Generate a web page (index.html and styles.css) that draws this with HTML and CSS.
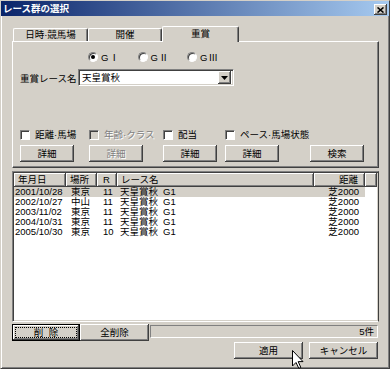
FILE: index.html
```html
<!DOCTYPE html>
<html lang="ja">
<head>
<meta charset="utf-8">
<title>レース群の選択</title>
<link rel="stylesheet" href="styles.css">
</head>
<body>
<div class="window">
  <div class="titlebar">
    <span class="title">レース群の選択</span>
    <span class="close"><svg width="7" height="6" viewBox="0 0 7 6"><path d="M0.5 0.5 L6.5 5.5 M6.5 0.5 L0.5 5.5" stroke="#000" stroke-width="1.6"/></svg></span>
  </div>
  <div class="body">
    <div class="tabs">
      <div class="tab t1">日時·競馬場</div>
      <div class="tab t2">開催</div>
      <div class="tab t3 active">重賞</div>
    </div>
    <div class="panel">
      <div class="radio-row">
        <div class="radio-item"><span class="radio checked"></span><span>G<span class="roman">Ⅰ</span></span></div>
        <div class="radio-item"><span class="radio"></span><span>G<span class="roman">Ⅱ</span></span></div>
        <div class="radio-item"><span class="radio"></span><span>G<span class="roman">Ⅲ</span></span></div>
      </div>
      <div class="combo-row">
        <span class="combo-label">重賞レース名</span>
        <div class="combo">
          <span class="combo-text">天皇賞秋</span>
          <span class="drop"><svg width="7" height="4" viewBox="0 0 7 4"><path d="M0 0 H7 L3.5 4 Z" fill="#000"/></svg></span>
        </div>
      </div>
      <div class="opts">
        <div class="chk"><span class="cb"></span><span>距離·馬場</span></div>
        <div class="chk disabled"><span class="cb"></span><span>年齢·クラス</span></div>
        <div class="chk"><span class="cb"></span><span>配当</span></div>
        <div class="chk wide"><span class="cb"></span><span>ペース·馬場状態</span></div>
        <div class="btn">詳細</div>
        <div class="btn disabled">詳細</div>
        <div class="btn">詳細</div>
        <div class="btn">詳細</div>
        <div class="btn">検索</div>
      </div>
    </div>
    <div class="list">
      <div class="lhead">
        <div class="hc">年月日</div>
        <div class="hc">場所</div>
        <div class="hc center">R</div>
        <div class="hc">レース名</div>
        <div class="hc right">距離</div>
        <div class="hc"></div>
      </div>
      <div class="lrow sel">
        <div class="c-date">2001/10/28</div><div class="c-place">東京</div><div class="c-r">11</div><div class="c-name">天皇賞秋<span class="grade">G1</span></div><div class="c-dist">芝2000</div><div></div>
      </div>
      <div class="lrow">
        <div class="c-date">2002/10/27</div><div class="c-place">中山</div><div class="c-r">11</div><div class="c-name">天皇賞秋<span class="grade">G1</span></div><div class="c-dist">芝2000</div><div></div>
      </div>
      <div class="lrow">
        <div class="c-date">2003/11/02</div><div class="c-place">東京</div><div class="c-r">11</div><div class="c-name">天皇賞秋<span class="grade">G1</span></div><div class="c-dist">芝2000</div><div></div>
      </div>
      <div class="lrow">
        <div class="c-date">2004/10/31</div><div class="c-place">東京</div><div class="c-r">11</div><div class="c-name">天皇賞秋<span class="grade">G1</span></div><div class="c-dist">芝2000</div><div></div>
      </div>
      <div class="lrow">
        <div class="c-date">2005/10/30</div><div class="c-place">東京</div><div class="c-r">10</div><div class="c-name">天皇賞秋<span class="grade">G1</span></div><div class="c-dist">芝2000</div><div></div>
      </div>
    </div>
    <div class="bottom-row">
      <div class="btn focus b-del"><span class="focus-inner">削&nbsp;&nbsp;除</span></div>
      <div class="btn b-all">全削除</div>
      <div class="status">5件</div>
    </div>
    <div class="action-row">
      <div class="btn b-act">適用</div>
      <div class="btn b-act">キャンセル</div>
    </div>
  </div>
  <svg class="cursor" width="12" height="19" viewBox="0 0 12 19"><path d="M0.5 0.5 V16 L4 12.5 L6.8 18.3 L8.8 17.4 L6.2 11.6 H11 Z" fill="#fff" stroke="#000" stroke-width="1" stroke-linejoin="miter"/></svg>
</div>
</body>
</html>
```

FILE: styles.css
```css
* {
  box-sizing: border-box;
  margin: 0;
  padding: 0;
}

body {
  margin: 0;
  width: 390px;
  height: 369px;
  overflow: hidden;
  background: #d4d0c8;
  font-family: "Liberation Sans", "Noto Sans CJK JP", sans-serif;
  font-size: 9.5px;
  color: #000;
}

.window {
  position: relative;
  width: 390px;
  height: 369px;
  background: #d4d0c8;
  border-top: 1px solid #d4d0c8;
  border-left: 1px solid #d4d0c8;
  border-right: 1px solid #404040;
  border-bottom: 1px solid #404040;
  box-shadow: inset 1px 1px #fff, inset -1px -1px #808080;
}

.titlebar {
  height: 15px;
  background: linear-gradient(to right, #0a246a, #a6caf0);
  display: flex;
  align-items: center;
  justify-content: space-between;
  padding: 0 2px 0 2px;
}

.title {
  color: #fff;
  font-weight: bold;
  font-size: 9.5px;
  line-height: 15px;
}

.close {
  width: 13px;
  height: 11px;
  margin-top: 2px;
  background: #d4d0c8;
  box-shadow: inset -1px -1px #404040, inset 1px 1px #fff, inset -2px -2px #808080;
  display: flex;
  align-items: center;
  justify-content: center;
}

.body {
  padding: 10px 9px 0 11px;
}

.tabs {
  display: flex;
  align-items: flex-end;
  height: 15px;
  padding-left: 1px;
}

.tab {
  height: 13px;
  width: 75px;
  background: #d4d0c8;
  border-top: 1px solid #fff;
  border-left: 1px solid #fff;
  border-right: 1px solid #404040;
  box-shadow: inset -1px 0 #808080;
  border-radius: 2px 2px 0 0;
  text-align: center;
  line-height: 12px;
  white-space: nowrap;
}

.tab.t2 {
  width: 74px;
}

.tab.active {
  position: relative;
  z-index: 1;
  width: 77px;
  height: 16px;
  margin-bottom: -1px;
  line-height: 13px;
}

.panel {
  width: 367px;
  height: 127px;
  border-top: 1px solid #fff;
  border-left: 1px solid #fff;
  border-right: 1px solid #404040;
  border-bottom: 1px solid #404040;
  box-shadow: inset -1px -1px #808080;
}

.radio-row {
  display: flex;
  height: 10px;
  margin-top: 10px;
  padding-left: 75px;
}

.radio-item {
  display: flex;
  align-items: center;
  gap: 3px;
  width: 49.5px;
  line-height: 10px;
  white-space: nowrap;
}

.roman {
  font-family: "Noto Sans CJK JP", sans-serif;
  margin-left: 1px;
}

.radio {
  position: relative;
  width: 10px;
  height: 10px;
  flex: none;
  border-radius: 50%;
  background: #fff;
  border: 1px solid;
  border-color: #808080 #fff #fff #808080;
  box-shadow: inset 1px 1px #404040;
}

.radio.checked::after {
  content: "";
  position: absolute;
  left: 2px;
  top: 2px;
  width: 4px;
  height: 4px;
  border-radius: 50%;
  background: #000;
}

.combo-row {
  display: flex;
  align-items: center;
  height: 17px;
  margin-top: 7px;
  padding-left: 7px;
}

.combo-label {
  width: 58px;
  white-space: nowrap;
}

.combo {
  width: 156px;
  height: 17px;
  background: #fff;
  border: 1px solid;
  border-color: #808080 #fff #fff #808080;
  box-shadow: inset 1px 1px #404040, inset -1px -1px #d4d0c8;
  display: flex;
  align-items: center;
  justify-content: space-between;
  padding: 0 2px 0 3px;
}

.combo-text {
  line-height: 13px;
}

.drop {
  width: 13px;
  height: 13px;
  background: #d4d0c8;
  box-shadow: inset -1px -1px #404040, inset 1px 1px #fff, inset -2px -2px #808080;
  display: flex;
  align-items: center;
  justify-content: center;
}

.opts {
  display: grid;
  grid-template-columns: 69px 74px 62px 85px 54px;
  grid-template-rows: 10px 17px;
  row-gap: 5px;
  margin-top: 44px;
  padding-left: 7px;
}

.chk {
  display: flex;
  align-items: center;
  gap: 5px;
  line-height: 10px;
  white-space: nowrap;
}

.chk.wide {
  grid-column: span 2;
}

.cb {
  width: 10px;
  height: 10px;
  flex: none;
  background: #fff;
  border: 1px solid;
  border-color: #808080 #fff #fff #808080;
  box-shadow: inset 1px 1px #404040;
}

.chk.disabled {
  color: #808080;
  text-shadow: 1px 1px #fff;
}

.chk.disabled .cb {
  background: #d4d0c8;
}

.btn {
  width: 54px;
  height: 17px;
  background: #d4d0c8;
  box-shadow: inset -1px -1px #404040, inset 1px 1px #fff, inset -2px -2px #808080;
  display: flex;
  align-items: center;
  justify-content: center;
  white-space: nowrap;
  line-height: 12px;
}

.btn.disabled {
  color: #808080;
  text-shadow: 1px 1px #fff;
}

.list {
  width: 367px;
  height: 151px;
  margin-top: 3px;
  padding: 1px;
  background: #fff;
  border: 1px solid;
  border-color: #808080 #404040 #fff #808080;
  box-shadow: inset 1px 1px #404040, inset -1px -1px #d4d0c8;
}

.lhead,
.lrow {
  display: grid;
  grid-template-columns: 52px 31px 20px 197px 51px 1fr;
}

.lhead {
  height: 14px;
}

.hc {
  background: #d4d0c8;
  border-right: 1px solid #404040;
  border-bottom: 1px solid #404040;
  box-shadow: inset 1px 1px #fff, inset -1px -1px #808080;
  line-height: 13px;
  padding-left: 4px;
  white-space: nowrap;
}

.hc.center {
  padding-left: 0;
  text-align: center;
}

.hc.right {
  text-align: right;
  padding-right: 6px;
}

.lrow {
  height: 10px;
  line-height: 10px;
  white-space: nowrap;
}

.lrow.sel > div:not(:last-child) {
  background: #d4d0c8;
}

.c-date {
  padding-left: 1px;
}

.c-place {
  padding-left: 5px;
}

.c-r {
  padding-left: 6px;
}

.c-name {
  padding-left: 3px;
}

.grade {
  margin-left: 5px;
}

.c-dist {
  text-align: right;
  padding-right: 6px;
}

.bottom-row {
  display: flex;
  align-items: flex-start;
  margin-top: 2px;
}

.btn.b-del {
  width: 68px;
  border: 1px solid #000;
  padding: 2px;
}

.focus-inner {
  flex: 1;
  align-self: stretch;
  border: 1px dotted #000;
  display: flex;
  align-items: center;
  justify-content: center;
  line-height: 9px;
}

.btn.b-all {
  width: 69px;
}

.status {
  width: 228px;
  height: 13px;
  margin-top: 1px;
  margin-left: 1px;
  border: 1px solid;
  border-color: #808080 #fff #fff #808080;
  text-align: right;
  padding-right: 3px;
  line-height: 11px;
}

.action-row {
  display: flex;
  justify-content: flex-end;
  gap: 6px;
  margin-top: 1px;
  padding-right: 2px;
}

.btn.b-act {
  width: 69px;
}

.cursor {
  position: absolute;
  left: 291px;
  top: 349px;
}
```
